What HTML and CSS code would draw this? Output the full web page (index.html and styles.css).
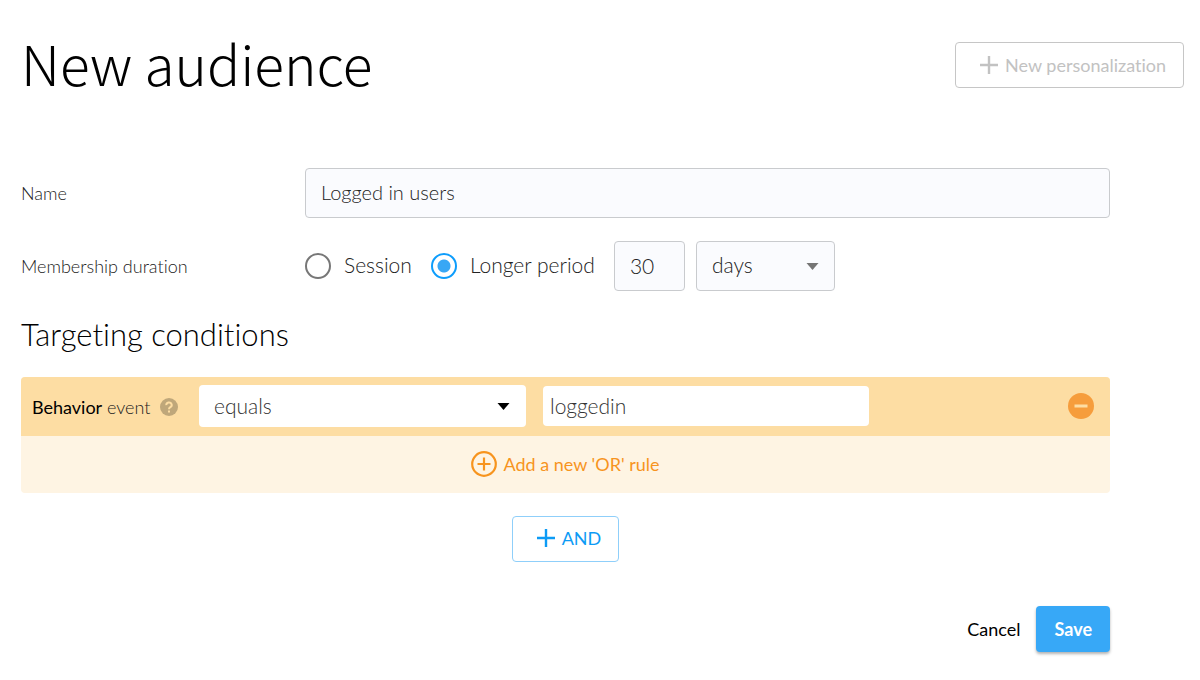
FILE: index.html
```html
<!DOCTYPE html>
<html lang="en">
<head>
<meta charset="utf-8">
<title>New audience</title>
<meta name="viewport" content="width=device-width, initial-scale=1">
<link rel="stylesheet" href="styles.css">
</head>
<body>
<header class="page-header">
  <h1 class="page-title">New audience</h1>
  <button class="btn btn-disabled" type="button" disabled>
    <svg class="plus" viewBox="0 0 20 20" aria-hidden="true"><path d="M10 1v18M1 10h18"/></svg>
    <span>New personalization</span>
  </button>
</header>
<form class="audience-form">
  <div class="row">
    <label class="row-label" for="name">Name</label>
    <input class="field field-name" id="name" type="text" value="Logged in users">
  </div>
  <div class="row">
    <span class="row-label" id="duration-label">Membership duration</span>
    <div class="duration" role="group" aria-labelledby="duration-label">
      <label class="choice"><input class="radio" type="radio" name="duration"><span>Session</span></label>
      <label class="choice"><input class="radio" type="radio" name="duration" checked><span>Longer period</span></label>
      <input class="field field-count" type="text" value="30" aria-label="Length of period">
      <div class="select-box select-unit">
        <select class="field field-unit" aria-label="Unit"><option>days</option></select>
        <svg class="caret" viewBox="0 0 12 7" aria-hidden="true"><path d="M0 0h12L6 7z"/></svg>
      </div>
    </div>
  </div>
  <h2 class="section-title">Targeting conditions</h2>
  <section class="condition">
    <div class="rule">
      <div class="rule-name">
        <span><span class="strong">Behavior</span> event</span>
        <svg class="help" viewBox="0 0 18 18" aria-hidden="true"><circle cx="9" cy="9" r="9"/><path d="M6.3 7.1a2.7 2.5 0 1 1 4 2.1C9.3 9.8 9 10.2 9 11.2"/><path d="M9 12.6v1.9"/></svg>
      </div>
      <div class="select-box select-operator">
        <select class="rule-field rule-operator" aria-label="Operator"><option>equals</option></select>
        <svg class="caret" viewBox="0 0 12 7" aria-hidden="true"><path d="M0 0h12L6 7z"/></svg>
      </div>
      <input class="rule-field rule-value" type="text" value="loggedin" aria-label="Value">
      <button class="remove" type="button" aria-label="Remove rule">
        <svg viewBox="0 0 26 26" aria-hidden="true"><circle cx="13" cy="13" r="13"/><path d="M6.5 13h13"/></svg>
      </button>
    </div>
    <button class="add-rule" type="button">
      <svg viewBox="0 0 26 26" aria-hidden="true"><circle cx="13" cy="13" r="11.8"/><path d="M13 6.5v13M6.5 13h13"/></svg>
      <span>Add a new 'OR' rule</span>
    </button>
  </section>
  <button class="btn btn-and" type="button">
    <svg class="plus" viewBox="0 0 20 20" aria-hidden="true"><path d="M10 1v18M1 10h18"/></svg>
    <span>AND</span>
  </button>
  <div class="actions">
    <button class="btn-cancel" type="button">Cancel</button>
    <button class="btn-save" type="submit">Save</button>
  </div>
</form>
</body>
</html>
```
FILE: styles.css
```css
* { box-sizing: border-box; }
body {
  margin: 0;
  padding: 24px 16px 24px 21px;
  background: #fff;
  color: #222;
  font: 300 21px/24px Lato, sans-serif;
  font-variant-ligatures: none;
}
button, input, select { font: inherit; font-variant-ligatures: none; color: inherit; margin: 0; }
button { cursor: pointer; }
.page-header {
  display: flex;
  align-items: flex-start;
  justify-content: space-between;
}
.page-title {
  margin: 0;
  color: #000;
  font: 300 55px/76px "Noto Sans CJK SC", "Noto Sans", sans-serif;
}
.btn {
  display: flex;
  align-items: center;
  gap: 6px;
  height: 46px;
  padding: 0 17px 0 23px;
  border: 1px solid #c6c6c6;
  border-radius: 4px;
  background: #fff;
  font-size: 18px;
  font-weight: 400;
}
.plus { width: 20px; height: 20px; fill: none; stroke: currentColor; stroke-width: 2.4; }
.btn-disabled { margin-top: 18px; color: #c2c2c2; cursor: default; }
.audience-form {
  display: flex;
  flex-direction: column;
  margin: 68px 74px 0 0;
}
.row {
  display: grid;
  grid-template-columns: 284px 1fr;
  align-items: center;
  margin-bottom: 23px;
}
.row-label { font-size: 18px; }
.field {
  height: 50px;
  padding: 0 15px 2px;
  border: 1px solid #c9cbce;
  border-radius: 4px;
  background: #fafbfe;
}
.field-name { width: 100%; font-size: 20px; }
.duration { display: flex; align-items: center; }
.choice { display: flex; align-items: center; gap: 13px; margin-right: 19px; }
.choice span { padding-bottom: 2px; }
.radio {
  appearance: none;
  width: 26px;
  height: 26px;
  border: 2px solid #777;
  border-radius: 50%;
  background: #fff;
}
.radio:checked {
  border-color: #0d9dfc;
  background: radial-gradient(circle, #38a7f5 6px, #fff 7px);
}
.field-count { width: 71px; margin-right: 11px; }
.select-box { position: relative; }
.select-box select { appearance: none; width: 100%; cursor: pointer; }
.select-unit { width: 139px; color: #222; }
.caret {
  position: absolute;
  top: 50%;
  right: 16px;
  width: 13px;
  height: 7px;
  margin-top: -3px;
  pointer-events: none;
}
.select-unit .caret { fill: #757575; }
.section-title {
  margin: 0 0 23px;
  color: #000;
  font-size: 31px;
  font-weight: 300;
  line-height: 40px;
}
.condition { border-radius: 4px; overflow: hidden; background: #fef4e3; }
.rule {
  display: flex;
  align-items: center;
  height: 59px;
  padding: 0 16px 2px 11px;
  background: #fddda3;
}
.rule-name {
  display: flex;
  align-items: center;
  justify-content: space-between;
  width: 146px;
  margin-right: 21px;
  padding-top: 2px;
  font-size: 18px;
}
.strong { color: #000; font-weight: 400; }
.help { width: 18px; height: 18px; fill: #bfa77a; }
.help path { fill: none; stroke: #fddda3; stroke-width: 2; }
.select-operator { width: 327px; margin-right: 17px; }
.rule-field { display: block; border: 0; border-radius: 4px; background: #fff; color: #333; }
.rule-operator { height: 42px; padding: 0 15px; }
.rule-value { width: 326px; height: 40px; padding: 0 7px; }
.remove {
  display: flex;
  margin-left: auto;
  padding: 0;
  border: 0;
  background: none;
}
.remove svg { width: 26px; height: 26px; fill: #f69d3c; }
.remove path { stroke: #fddda3; stroke-width: 3; }
.add-rule {
  display: flex;
  align-items: center;
  justify-content: center;
  gap: 6px;
  width: 100%;
  height: 57px;
  padding: 0 0 2px;
  border: 0;
  background: none;
  color: #f7941e;
  font-size: 18px;
  font-weight: 400;
}
.add-rule svg { width: 26px; height: 26px; fill: none; stroke: currentColor; stroke-width: 2.2; }
.btn-and {
  align-self: center;
  margin-top: 23px;
  padding-bottom: 2px;
  border-color: #8fcffa;
  color: #0d9bf5;
}
.actions {
  display: flex;
  align-items: center;
  justify-content: flex-end;
  gap: 16px;
  margin-top: 44px;
}
.btn-cancel, .btn-save { border: 0; font-size: 18px; font-weight: 400; }
.btn-cancel { padding: 0; background: none; color: #000; }
.btn-save {
  height: 46px;
  padding: 0 18px;
  border-radius: 4px;
  background: #37a8f7;
  box-shadow: 0 2px 3px rgba(0, 0, 0, 0.3);
  color: #fff;
  font-weight: 700;
}
```
